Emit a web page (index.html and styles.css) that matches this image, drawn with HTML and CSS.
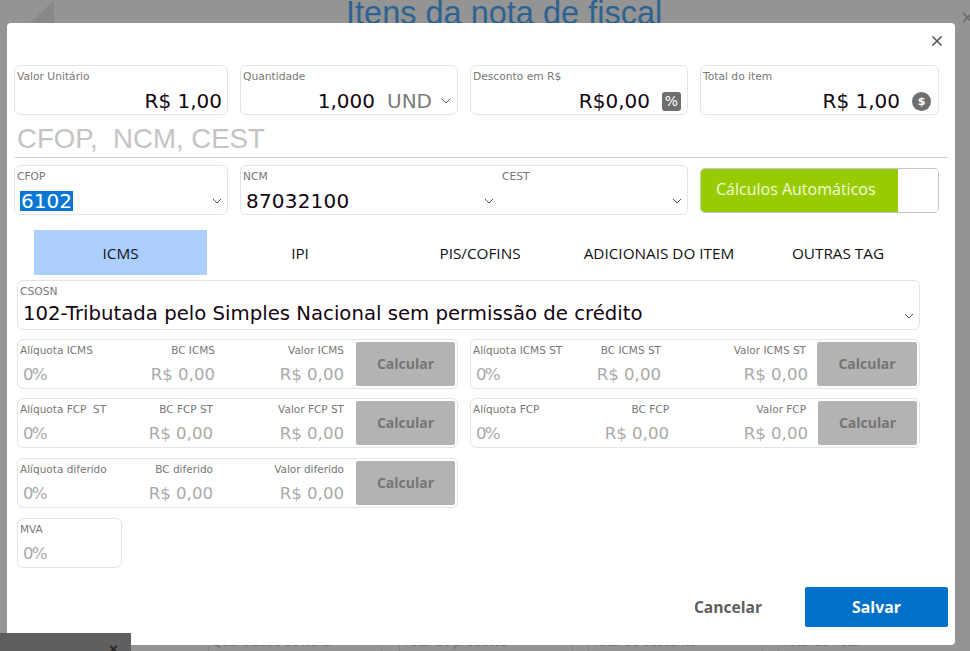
FILE: index.html
```html
<!DOCTYPE html>
<html lang="pt-BR">
<head>
<meta charset="utf-8">
<title>Itens da nota de fiscal</title>
<link rel="stylesheet" href="styles.css">
</head>
<body>
<div class="backdrop">
  <div class="corner"></div>
  <h1 class="page-title">Itens da nota de fiscal</h1>
  <div class="page-close">×</div>
  <div class="sum sum-a">Quantidade de itens</div>
  <div class="sum sum-b">Total de produtos</div>
  <div class="sum sum-c">Total do desconto</div>
  <div class="sum sum-d">Total da nota</div>
</div>
<main class="modal">
  <div class="close-row">
    <svg class="close-icon" viewBox="0 0 12 12"><path d="M1.5 1.5l9 9M10.5 1.5l-9 9"/></svg>
  </div>
  <div class="row row-top">
    <div class="field w-a"><label>Valor Unitário</label><div class="val">R$ 1,00</div></div>
    <div class="field w-b"><label>Quantidade</label><div class="val"><span>1,000</span><span class="unit">UND</span>
      <svg class="chev" viewBox="0 0 10 6"><path d="M1 1l4 4 4-4"/></svg></div></div>
    <div class="field w-b"><label>Desconto em R$</label><div class="val"><span>R$0,00</span><span class="pct">%</span></div></div>
    <div class="field w-c"><label>Total do item</label><div class="val"><span>R$ 1,00</span><span class="coin">$</span></div></div>
  </div>
  <h2 class="section">CFOP,&nbsp; NCM, CEST</h2>
  <div class="row row-second">
    <div class="field w-a"><label>CFOP</label><div class="val left"><span class="selected">6102</span>
      <svg class="chev push" viewBox="0 0 10 6"><path d="M1 1l4 4 4-4"/></svg></div></div>
    <div class="field double">
      <div class="half"><label>NCM</label><div class="val left in"><span>87032100</span><svg class="chev push" viewBox="0 0 10 6"><path d="M1 1l4 4 4-4"/></svg></div></div>
      <div class="half-b"><label>CEST</label><div class="val left"><svg class="chev push" viewBox="0 0 10 6"><path d="M1 1l4 4 4-4"/></svg></div></div>
    </div>
    <div class="toggle"><span class="toggle-on">Cálculos Automáticos</span><span class="toggle-knob"></span></div>
  </div>
  <nav class="tabs">
    <div class="tab active">ICMS</div>
    <div class="tab t2">IPI</div>
    <div class="tab t3">PIS/COFINS</div>
    <div class="tab t4">ADICIONAIS DO ITEM</div>
    <div class="tab t5">OUTRAS TAG</div>
  </nav>
  <div class="field csosn"><label>CSOSN</label><div class="val left big"><span>102-Tributada pelo Simples Nacional sem permissão de crédito</span>
    <svg class="chev push" viewBox="0 0 10 6"><path d="M1 1l4 4 4-4"/></svg></div></div>
  <div class="tax-grid">
    <div class="group">
      <div class="c1"><label>Alíquota ICMS</label><div class="ghost">0%</div></div>
      <div class="c2"><label>BC ICMS</label><div class="ghost">R$ 0,00</div></div>
      <div class="c3"><label>Valor ICMS</label><div class="ghost">R$ 0,00</div></div>
      <button class="calc">Calcular</button>
    </div>
    <div class="group right">
      <div class="c1 m-c"><label>Alíquota ICMS ST</label><div class="ghost">0%</div></div>
      <div class="c2"><label>BC ICMS ST</label><div class="ghost">R$ 0,00</div></div>
      <div class="c3"><label>Valor ICMS ST</label><div class="ghost">R$ 0,00</div></div>
      <button class="calc wide-btn">Calcular</button>
    </div>
    <div class="group">
      <div class="c1 m-b"><label>Alíquota FCP&nbsp; ST</label><div class="ghost">0%</div></div>
      <div class="c2"><label>BC FCP ST</label><div class="ghost">R$ 0,00</div></div>
      <div class="c3"><label>Valor FCP ST</label><div class="ghost">R$ 0,00</div></div>
      <button class="calc">Calcular</button>
    </div>
    <div class="group right">
      <div class="c1 m-d"><label>Alíquota FCP</label><div class="ghost">0%</div></div>
      <div class="c2"><label>BC FCP</label><div class="ghost">R$ 0,00</div></div>
      <div class="c3"><label>Valor FCP</label><div class="ghost">R$ 0,00</div></div>
      <button class="calc">Calcular</button>
    </div>
    <div class="group third">
      <div class="c1 m-b"><label>Alíquota diferido</label><div class="ghost">0%</div></div>
      <div class="c2"><label>BC diferido</label><div class="ghost">R$ 0,00</div></div>
      <div class="c3"><label>Valor diferido</label><div class="ghost">R$ 0,00</div></div>
      <button class="calc">Calcular</button>
    </div>
  </div>
  <div class="group mva"><div class="c1"><label>MVA</label><div class="ghost">0%</div></div></div>
  <footer class="actions">
    <button class="cancel">Cancelar</button>
    <button class="save">Salvar</button>
  </footer>
</main>
<div class="dark-bar"><span>×</span></div>
</body>
</html>
```
FILE: styles.css
```css
* { box-sizing: border-box; }
html, body { margin: 0; height: 651px; overflow: hidden; }
body { background: #949494; font-family: "DejaVu Sans", sans-serif; color: #140512; }

.backdrop { position: absolute; inset: 0; overflow: hidden; background: #949494; }
.corner { position: absolute; left: 0; top: 0; width: 54px; height: 23px; background: #888; clip-path: polygon(100% 0, 100% 100%, 55% 100%); }
.page-title { position: absolute; left: 346px; top: -5px; margin: 0; font: 400 32.5px "Liberation Sans", sans-serif; color: #2d6391; white-space: nowrap; }
.page-close { position: absolute; left: 961px; top: 5px; font: 22px "Liberation Sans", sans-serif; color: #6d6d6d; }
.dark-bar { position: absolute; left: 0; top: 633px; width: 131px; height: 18px; background: #5f5f5f; overflow: hidden; }
.dark-bar span { position: absolute; left: 109px; top: 7px; font: 700 15px "Liberation Sans", sans-serif; color: #222; }
.sum { position: absolute; top: 634px; height: 17px; overflow: hidden; font: 12.5px/15px "Open Sans", sans-serif; color: #6f6f6f; padding-left: 3px; border-left: 1px solid #858585; border-right: 1px solid #858585; white-space: nowrap; }
.sum-a { left: 208px; width: 174px; }
.sum-b { left: 399px; width: 174px; }
.sum-c { left: 588px; width: 175px; }
.sum-d { left: 778px; width: 120px; border-right: 0; }

.modal { position: absolute; left: 7px; top: 23px; width: 948px; height: 622px; background: #fff; border-radius: 4px; }
.close-row { height: 42px; display: flex; justify-content: flex-end; padding: 12px 12px 0 0; }
.close-icon { width: 12px; height: 12px; fill: none; stroke: #555; stroke-width: 1.6; }

.row { display: flex; gap: 12px; padding-left: 7px; }
.field { height: 50px; border: 1px solid #e4e4e4; border-radius: 6px; padding: 4px 3px 0 2px; background: #fff; }
label { display: block; font-size: 10.7px; line-height: 14px; color: #777; white-space: nowrap; }
.w-a { width: 214px; }
.w-b { width: 218px; }
.w-c { width: 239px; }
.val { display: flex; justify-content: flex-end; align-items: center; gap: 12px; height: 26px; margin-top: 4px; padding-right: 2px; font-size: 20px; line-height: 26px; white-space: nowrap; }
.val.left { justify-content: flex-start; padding-right: 0; }
.unit { color: #7b7b7b; }
.chev { width: 10px; height: 6px; flex: none; fill: none; stroke: #555; stroke-width: 1; margin: 0 1px 0 -3px; }
.push { margin: 0 2px 0 auto; }
.pct { width: 19px; height: 19px; background: #6e6e6e; color: #fff; border-radius: 3px; font-size: 14px; line-height: 19px; text-align: center; margin-right: 1px; }
.coin { width: 19px; height: 19px; background: #6e6e6e; color: #fff; border-radius: 50%; font-size: 11px; font-weight: 700; line-height: 19px; text-align: center; margin-right: 2px; }

.section { margin: 7px 0 0 8px; width: 933px; height: 36px; border-bottom: 1px solid #ccc; font: 400 27.6px/34px "Liberation Sans", sans-serif; color: #c4c4c4; padding-left: 2px; }
.row-second { margin-top: 7px; }
.selected { background: #0a78d2; color: #fff; padding: 0 1px; margin-left: 3px; height: 20px; line-height: 20px; font-size: 20px; }
.double { width: 448px; display: flex; padding: 4px 3px 0 2px; }
.half { width: 259px; padding-right: 6px; }
.half-b { flex: 1; }
.in { padding-left: 3px; letter-spacing: .2px; }
.toggle { width: 239px; height: 45px; margin-top: 3px; display: flex; border-radius: 5px; border: 1px solid #c6c6c6; overflow: hidden; }
.toggle-on { flex: 1; background: #9c0; color: #f4fbdc; font: 16px/41px "Open Sans", sans-serif; padding-left: 15px; }
.toggle-knob { width: 40px; background: #fff; border-radius: 6px 0 0 6px; }

.tabs { display: flex; margin: 15px 0 0 27px; height: 45px; }
.tab { font-size: 15.3px; line-height: 47px; text-align: center; color: #111; white-space: nowrap; font-family: "Open Sans", "DejaVu Sans", sans-serif; }
.active { width: 173px; background: #accfff; }
.t2 { width: 186px; }
.t3 { width: 174px; }
.t4 { width: 184px; }
.t5 { width: 174px; }

.csosn { width: 903px; margin: 5px 0 0 10px; }
.big { height: 28px; margin-top: 1px; padding-left: 3px; font-size: 19.7px; }
.big .chev { margin-top: 4px; }

.tax-grid { display: grid; grid-template-columns: 441px 450px; column-gap: 12px; row-gap: 9px; margin: 9px 0 0 10px; align-items: start; }
.group { height: 50px; border: 1px solid #e4e4e4; border-radius: 6px; display: flex; padding: 2px 2px 0 2px; }
.group label { font-size: 10.5px; }
.third { margin-top: 1px; }
.c1 { width: 115px; padding-top: 1px; }
.m-b { width: 113px; }
.m-c { width: 108px; }
.m-d { width: 116px; }
.c2, .c3 { padding-top: 1px; text-align: right; }
.c2 { width: 80px; flex: none; }
.c3 { flex: 1; }
.ghost { font-size: 16.6px; line-height: 26px; color: #aaa; white-space: nowrap; margin-top: 5px; }
.c1 .ghost { padding-left: 3px; letter-spacing: -1.8px; }
.right .c3 .ghost { margin-right: -2px; }
.calc { width: 99px; height: 44px; margin-left: 12px; padding: 0 0 2px; border: 0; border-radius: 2px; background: #b3b3b3; color: #757575; font: 700 14px "Open Sans", sans-serif; flex: none; }
.wide-btn { width: 100px; margin-left: 11px; }
.mva { width: 105px; margin: 10px 0 0 10px; }
.actions { display: flex; justify-content: flex-end; align-items: center; margin: 19px 7px 0 0; }
.cancel { background: none; border: 0; font: 700 15.6px "Open Sans", sans-serif; color: #5f5f5f; margin-right: 43px; padding: 0; }
.save { width: 143px; height: 40px; background: #0070c9; color: #fff; border: 0; border-radius: 2px; font: 700 15.8px "Open Sans", sans-serif; }
```
